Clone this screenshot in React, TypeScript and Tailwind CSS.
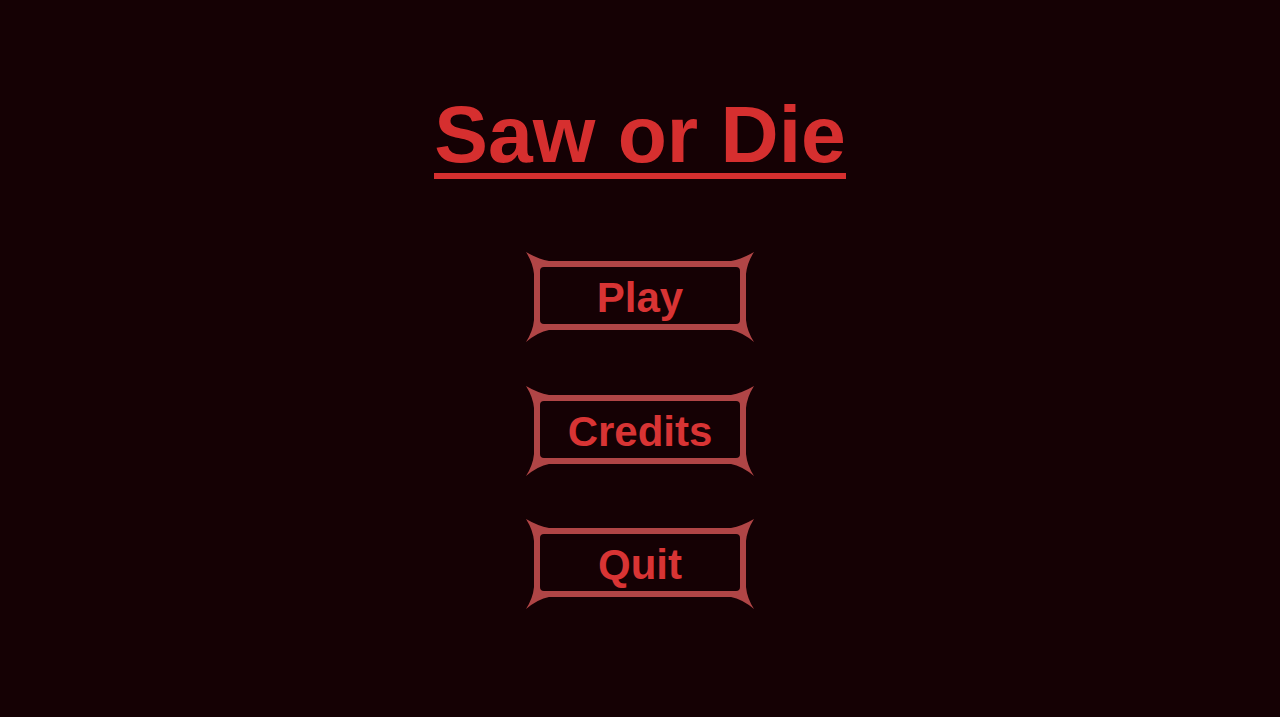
import React from 'react';

const FONT = { fontFamily: '"Liberation Sans", Arial, sans-serif' };

// Decorative plate behind each menu entry: a thin band with flared corner spikes
const ButtonFrame: React.FC = () => (
  <svg className="absolute inset-0 h-full w-full" viewBox="0 0 230 90" preserveAspectRatio="none">
    <path
      fill="#b04546"
      fillRule="evenodd"
      d="M1,0 Q13,7 24,9 H206 Q217,7 229,0 Q222,11 221,22 V68 Q222,79 229,90 Q217,80 206,78 H24 Q13,80 1,90 Q8,79 9,68 V22 Q8,11 1,0 Z
         M19,15 H211 Q215,15 215,19 V68 Q215,72 211,72 H19 Q15,72 15,68 V19 Q15,15 19,15 Z"
    />
  </svg>
);

const MenuButton: React.FC<{ label: string; onClick?: () => void }> = ({ label, onClick }) => (
  <button
    onClick={onClick}
    className="relative flex h-[90px] w-[230px] items-center justify-center bg-transparent"
  >
    <ButtonFrame />
    <span className="relative pt-[2px] text-[42px] font-bold leading-none text-[#d83434]" style={FONT}>
      {label}
    </span>
  </button>
);

export default function App() {
  const items = ['Play', 'Credits', 'Quit'];

  return (
    <div className="flex min-h-[717px] w-full flex-col items-center bg-[#150104] pt-[95px]" style={FONT}>
      <h1 className="inline-block border-b-[6px] border-[#d62f2f] text-[80.5px] font-bold leading-[78px] text-[#d62f2f]">
        Saw or Die
      </h1>

      <div className="mt-[73px] flex flex-col items-center gap-[43.5px]">
        {items.map((item) => (
          <MenuButton key={item} label={item} />
        ))}
      </div>
    </div>
  );
}
